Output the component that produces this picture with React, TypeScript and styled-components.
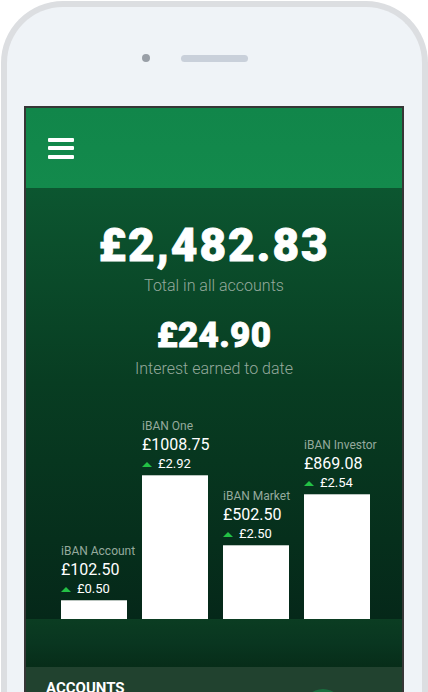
import React from 'react'
import styled, { createGlobalStyle } from 'styled-components'

const GlobalStyle = createGlobalStyle`
  html, body {
    margin: 0;
    padding: 0;
    background: #ffffff;
    overflow: hidden;
  }
  body {
    font-family: Roboto, 'Liberation Sans', Arial, sans-serif;
  }
`

type Account = {
  name: string
  balance: string
  interest: string
  height: number
}

const ACCOUNTS: Account[] = [
  { name: 'iBAN Account', balance: '£102.50', interest: '£0.50', height: 19 },
  { name: 'iBAN One', balance: '£1008.75', interest: '£2.92', height: 144 },
  { name: 'iBAN Market', balance: '£502.50', interest: '£2.50', height: 74 },
  { name: 'iBAN Investor', balance: '£869.08', interest: '£2.54', height: 125 },
]

const Phone = styled.div`
  box-sizing: border-box;
  margin: 1px 0 0 1px;
  width: 427px;
  height: 760px;
  padding: 0 18px 0 17px;
  background: #eff3f7;
  border: 6px solid #dcdee1;
  border-bottom: none;
  border-radius: 62px 62px 0 0;
`

const Bezel = styled.div`
  box-sizing: border-box;
  height: 99px;
  padding-top: 47px;
  display: grid;
  grid-template-columns: 1fr auto 1fr;
  grid-template-rows: 8px;
  align-content: start;
  align-items: center;
`

const Camera = styled.div`
  justify-self: end;
  width: 8px;
  height: 8px;
  margin-right: 31px;
  border-radius: 50%;
  background: #999fa7;
`

const Speaker = styled.div`
  width: 67px;
  height: 7px;
  border-radius: 4px;
  background: #c9d0da;
`

const Screen = styled.div`
  border: 2px solid #363636;
  border-bottom: none;
  background: #21422f;
`

const Header = styled.header`
  box-sizing: border-box;
  height: 80px;
  padding-left: 22px;
  display: flex;
  align-items: center;
  background: linear-gradient(180deg, #11864a 0%, #138a4c 100%);
`

const Burger = styled.div`
  display: flex;
  flex-direction: column;
  gap: 4.5px;

  & > span {
    display: block;
    width: 26px;
    height: 4px;
    border-radius: 1px;
    background: #ffffff;
  }
`

const Summary = styled.section`
  box-sizing: border-box;
  height: 431px;
  display: flex;
  flex-direction: column;
  align-items: center;
  background: linear-gradient(180deg, #0c5630 0%, #083d22 45%, #052819 100%);
`

const Total = styled.div<{ $size: number; $lineHeight: number; $top: number; $spacing: number }>`
  margin-top: ${(p) => p.$top}px;
  font-size: ${(p) => p.$size}px;
  line-height: ${(p) => p.$lineHeight}px;
  letter-spacing: ${(p) => p.$spacing}px;
  font-weight: 900;
  color: #ffffff;
  -webkit-text-stroke: 0.8px #ffffff;
`

const Caption = styled.div<{ $top: number }>`
  margin-top: ${(p) => p.$top}px;
  font-size: 16px;
  line-height: 20px;
  font-weight: 300;
  color: #95aa9d;
`

const Chart = styled.div`
  box-sizing: border-box;
  width: 100%;
  margin-top: auto;
  padding-left: 35px;
  display: flex;
  align-items: flex-end;
  gap: 15px;
`

const Column = styled.div`
  width: 66px;
  display: flex;
  flex-direction: column;
`

const AccountName = styled.div`
  font-size: 12px;
  line-height: 14px;
  color: #95aa9d;
  white-space: nowrap;
`

const Balance = styled.div`
  margin-top: 2px;
  font-size: 16px;
  line-height: 19px;
  color: #ffffff;
  white-space: nowrap;
`

const Change = styled.div`
  margin-top: 3px;
  display: flex;
  align-items: center;
  gap: 6px;
  font-size: 13px;
  line-height: 14px;
  color: #ffffff;
`

const UpArrow = styled.span`
  width: 0;
  height: 0;
  border-left: 5px solid transparent;
  border-right: 5px solid transparent;
  border-bottom: 5px solid #23c145;
`

const Bar = styled.div`
  box-sizing: border-box;
  margin-top: 4px;
  background: #ffffff;
  border-top: 1px solid #b9c4be;
`

const Band = styled.div`
  height: 48px;
  background: linear-gradient(180deg, #0b3d22 0%, #093620 50%, #072d19 100%);
`

const Panel = styled.section`
  min-height: 120px;
  padding: 12px 59px 0 20px;
  display: flex;
  justify-content: space-between;
  align-items: flex-start;
  background: #21422f;
`

const PanelTitle = styled.h2`
  margin: 0;
  font-size: 15px;
  line-height: 18px;
  font-weight: 700;
  color: #ffffff;
  text-transform: uppercase;
`

const Badge = styled.div`
  margin-top: 10px;
  width: 40px;
  height: 40px;
  border-radius: 50%;
  background: #1a6e3f;
`

export default function App() {
  return (
    <>
      <GlobalStyle />
      <Phone>
        <Bezel>
          <Camera />
          <Speaker />
        </Bezel>
        <Screen>
          <Header>
            <Burger>
              <span />
              <span />
              <span />
            </Burger>
          </Header>

          <Summary>
            <Total $size={46} $lineHeight={52} $top={31} $spacing={1.9}>£2,482.83</Total>
            <Caption $top={5}>Total in all accounts</Caption>
            <Total $size={35} $lineHeight={42} $top={19} $spacing={0.3}>£24.90</Total>
            <Caption $top={2}>Interest earned to date</Caption>

            <Chart>
              {ACCOUNTS.map((account) => (
                <Column key={account.name}>
                  <AccountName>{account.name}</AccountName>
                  <Balance>{account.balance}</Balance>
                  <Change>
                    <UpArrow />
                    <span>{account.interest}</span>
                  </Change>
                  <Bar style={{ height: account.height }} />
                </Column>
              ))}
            </Chart>
          </Summary>

          <Band />

          <Panel>
            <PanelTitle>Accounts</PanelTitle>
            <Badge />
          </Panel>
        </Screen>
      </Phone>
    </>
  )
}
